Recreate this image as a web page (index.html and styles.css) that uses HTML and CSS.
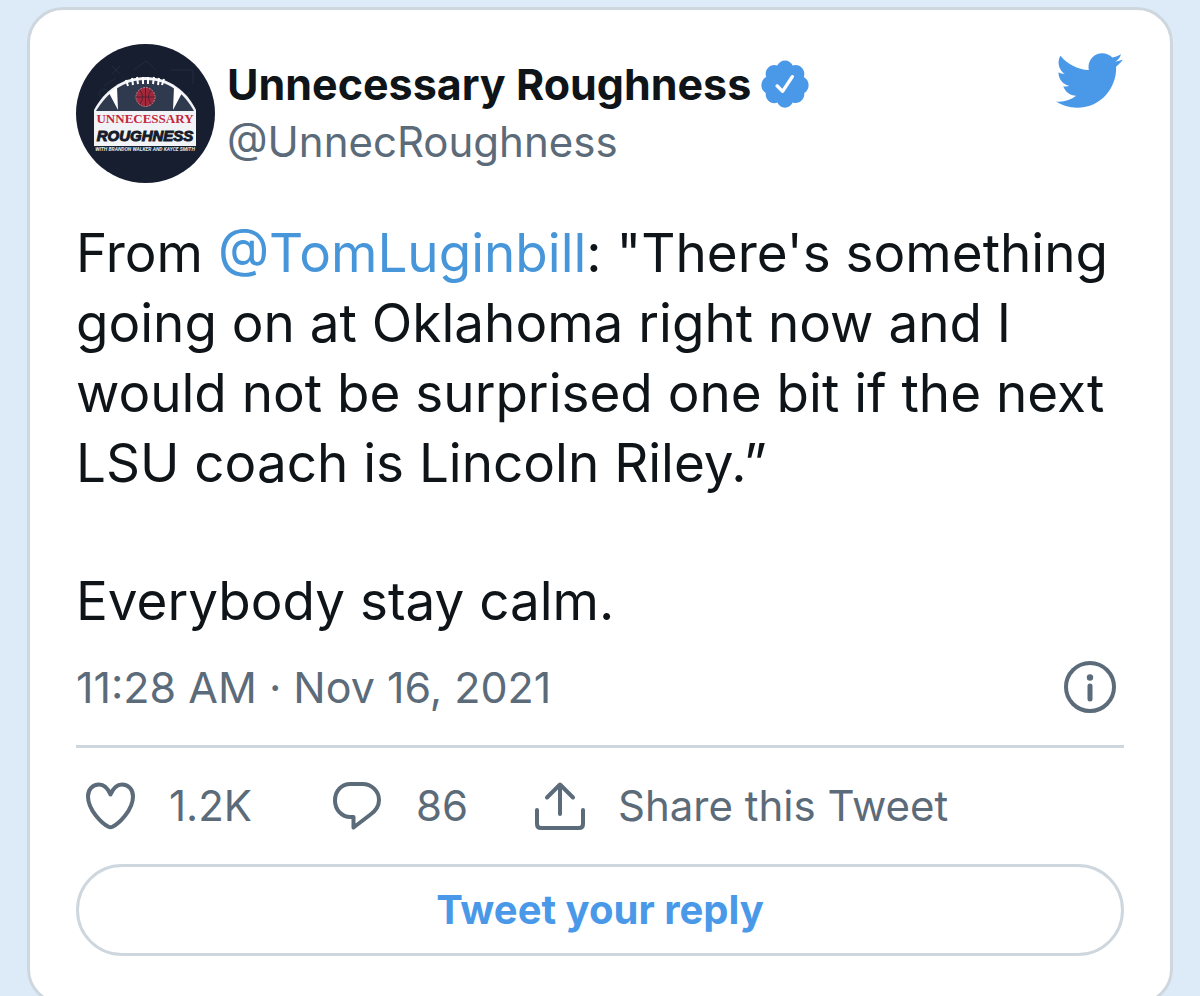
FILE: index.html
```html
<!DOCTYPE html>
<html lang="en">
<head>
    <meta charset="UTF-8">
    <meta name="viewport" content="width=device-width, initial-scale=1.0">
    <title>Unnecessary Roughness on Twitter</title>
    <link rel="stylesheet" href="styles.css">
</head>
<body>
    <article class="tweet">
        <header class="tweet-header">
            <a class="avatar" href="#" aria-label="Unnecessary Roughness">
                <svg viewBox="0 0 139 139">
                    <circle cx="69.500" cy="69.500" r="69.500" fill="#171e30"/>
                    <g fill="none" stroke="#222b40" stroke-width="1">
                        <path d="M36 22l8 8m0-8l-8 8M58 26l12-9 10 9M95 26h22v14M28 42l12-8M104 48l10 10m0-10l-10 10"/>
                        <circle cx="28" cy="50" r="5"/>
                    </g>
                    <!-- football -->
                    <path d="M18 66C28 47 46 33 69.500 33S111 47 120 66v36H18z" fill="#f2f3f6"/>
                    <path d="M20 67C31 49 47 36 69.500 36S108 49 118 67z" fill="#2f3a4e"/>
                    <path d="M33 49L41 43 42 66zM106 49L98 43 97 66z" fill="#fff"/>
                    <path d="M50 36l2 6m4-8l1 7m4-8l1 7m5-7v7m5-7v7m6-7l-1 7m6-6l-1 7m6-6l-2 6" stroke="#fff" stroke-width="2"/>
                    <circle cx="69.500" cy="53" r="9.500" fill="#a3283c"/>
                    <circle cx="69.500" cy="53" r="9.500" fill="none" stroke="#b9828f" stroke-width="1" stroke-dasharray="2 1"/>
                    <path d="M60 53h19M69.500 44v18M64 46q5 7 0 14M75 46q-5 7 0 14" fill="none" stroke="#571f32" stroke-width="1"/>
                    <text class="logo-top" x="69" y="79" text-anchor="middle">UNNECESSARY</text>
                    <text class="logo-mid" x="69" y="97" text-anchor="middle">ROUGHNESS</text>
                    <text class="logo-sub" x="69" y="107" text-anchor="middle">WITH BRANDON WALKER AND KAYCE SMITH</text>
                </svg>
            </a>
            <div class="author">
                <a class="author-name" href="#">Unnecessary Roughness
                    <svg class="verified" viewBox="0 0 24 24" aria-label="Verified account"><path d="M22.500 12.500c0-1.580-.875-2.950-2.148-3.600.154-.435.238-.905.238-1.400 0-2.210-1.710-3.998-3.818-3.998-.470 0-.920.084-1.336.250C14.818 2.415 13.510 1.500 12 1.500s-2.816.917-3.437 2.250c-.415-.165-.866-.250-1.336-.250-2.110 0-3.818 1.790-3.818 4 0 .494.083.964.237 1.400-1.272.650-2.147 2.018-2.147 3.600 0 1.495.782 2.798 1.942 3.486-.020.170-.032.340-.032.514 0 2.210 1.708 4 3.818 4 .470 0 .920-.086 1.335-.250.620 1.334 1.926 2.250 3.437 2.250 1.512 0 2.818-.916 3.437-2.250.415.163.865.248 1.336.248 2.110 0 3.818-1.790 3.818-4 0-.174-.012-.344-.033-.513 1.158-.687 1.943-1.990 1.943-3.484zm-6.616-3.334l-4.334 6.500c-.145.217-.382.334-.625.334-.143 0-.288-.040-.416-.126l-.115-.094-2.415-2.415c-.293-.293-.293-.768 0-1.060s.768-.294 1.060 0l1.770 1.767 3.825-5.740c.230-.345.696-.436 1.040-.207.346.230.440.696.210 1.040z"/></svg>
                </a>
                <a class="author-handle" href="#">@UnnecRoughness</a>
            </div>
            <a class="bird" href="#" aria-label="View on Twitter">
                <svg viewBox="0 0 24 24"><path d="M23.643 4.937c-.835.370-1.732.620-2.675.733.962-.576 1.700-1.490 2.048-2.578-.900.534-1.897.922-2.958 1.130-.850-.904-2.060-1.470-3.400-1.470-2.572 0-4.658 2.086-4.658 4.660 0 .364.042.718.120 1.060-3.873-.195-7.304-2.050-9.602-4.868-.400.690-.630 1.490-.630 2.342 0 1.616.823 3.043 2.072 3.878-.764-.025-1.482-.234-2.110-.583v.060c0 2.257 1.605 4.140 3.737 4.568-.392.106-.803.162-1.227.162-.300 0-.593-.028-.877-.082.593 1.850 2.313 3.198 4.352 3.234-1.595 1.250-3.604 1.995-5.786 1.995-.376 0-.747-.022-1.112-.065 2.062 1.323 4.510 2.093 7.140 2.093 8.570 0 13.255-7.098 13.255-13.254 0-.200-.005-.402-.014-.602.910-.658 1.700-1.477 2.323-2.410z"/></svg>
            </a>
        </header>

        <div class="tweet-text">
            <p>From <a href="#">@TomLuginbill</a>: "There's something going on at Oklahoma right now and I would not be surprised one bit if the next LSU coach is Lincoln Riley.”</p>
            <p>Everybody stay calm.</p>
        </div>

        <div class="tweet-meta">
            <a class="date" href="#">11:28 AM · Nov 16, 2021</a>
            <a class="info" href="#" aria-label="Twitter Ads info and privacy">
                <svg viewBox="0 0 52 52">
                    <circle cx="26" cy="26" r="24" fill="none" stroke="currentColor" stroke-width="4"/>
                    <circle cx="26" cy="16.500" r="3.200" fill="currentColor"/>
                    <path d="M26 25v13" fill="none" stroke="currentColor" stroke-width="5" stroke-linecap="round"/>
                </svg>
            </a>
        </div>

        <div class="actions">
            <button class="action" type="button" aria-label="Like, 1.2K">
                <svg viewBox="0 0 50 50"><path d="M24.500 13.500C22 7.500 18 3.500 13 3.500 6.500 3.500 2 8.500 2 15.500 2 29 16 42.500 22.500 45.700c1.400.700 2.600.700 4 0C33 42.500 47 29 47 15.500 47 8.500 42.500 3.500 36 3.500c-5 0-9 4-11.500 10z"/></svg>
                <span>1.2K</span>
            </button>
            <button class="action" type="button" aria-label="Reply, 86">
                <svg viewBox="0 0 50 50"><path d="M17.500 3h12C38.500 3 46 10 46 19c0 6-3 10.500-8.500 14.500L20.500 46.500V36h-3C8.500 36 2 28.500 2 19.500 2 10 8.500 3 17.500 3z"/></svg>
                <span>86</span>
            </button>
            <button class="action" type="button">
                <svg viewBox="0 0 50 50"><path d="M25 4v29M12 16.500L25 3.500l13 13M2 29v14q0 4 4 4h38q4 0 4-4V29"/></svg>
                <span>Share this Tweet</span>
            </button>
        </div>

        <button class="reply-btn" type="button">Tweet your reply</button>
    </article>
</body>
</html>
```
FILE: styles.css
```css
* {
    margin: 0;
    padding: 0;
    box-sizing: border-box;
}

body {
    background: #ddebf9;
    color: #0f1419;
    font-family: Inter, "Liberation Sans", sans-serif;
    padding: 7px 27px 0;
}

a {
    color: inherit;
    text-decoration: none;
}

svg {
    display: block;
}

.tweet {
    background: #fff;
    border: 3px solid #cfd7de;
    border-radius: 36px;
    padding: 34px 46px 46px;
}

/* header */
.tweet-header {
    display: flex;
    align-items: flex-start;
}

.avatar svg {
    width: 139px;
    height: 139px;
}

.logo-top {
    font: bold 13px "Liberation Serif", serif;
    fill: #c3263c;
    stroke: #c3263c;
    stroke-width: 0;
}

.logo-mid {
    font: italic bold 15px "Liberation Sans", sans-serif;
    fill: #151b2b;
    stroke: #151b2b;
    stroke-width: 1px;
}

.logo-sub {
    font: italic bold 5px Roboto, sans-serif;
    fill: #e4e6ea;
}

.author {
    flex: 1;
    display: flex;
    flex-direction: column;
    padding: 11px 0 0 12px;
    font-size: 42px;
    line-height: 58px;
}

.author-name {
    display: flex;
    align-items: center;
    gap: 7px;
    font-size: 43px;
    font-weight: 700;
}

.verified {
    width: 54px;
    height: 54px;
    fill: #4a99e9;
}

.author-handle {
    color: #5b6b79;
}

.bird svg {
    width: 71px;
    height: 73px;
    fill: #4a99e9;
}

/* text */
.tweet-text {
    margin-top: 35px;
    font-size: 53px;
    line-height: 70px;
}

.tweet-text p + p {
    margin-top: 68px;
}

.tweet-text a {
    color: #4896da;
}

.tweet-meta {
    display: flex;
    justify-content: space-between;
    align-items: center;
    padding: 25px 8px 32px 0;
    border-bottom: 3px solid #cfd7de;
    color: #5b6b79;
    font-size: 43px;
    line-height: 52px;
}

.info svg {
    width: 52px;
    height: 52px;
}

/* actions */
.actions {
    display: grid;
    grid-template-columns: 247px 202px 1fr;
    padding: 32px 0 32px 10px;
}

.action {
    display: flex;
    align-items: center;
    gap: 33px;
    background: none;
    border: 0;
    color: #5b6b79;
    font-family: inherit;
    font-size: 42px;
    line-height: 52px;
    cursor: pointer;
}

.action svg {
    width: 50px;
    height: 50px;
    fill: none;
    stroke: currentColor;
    stroke-width: 4;
    stroke-linecap: round;
    stroke-linejoin: round;
}

.reply-btn {
    width: 100%;
    padding: 18px;
    background: #fff;
    border: 3px solid #cfd7de;
    border-radius: 46px;
    color: #4a99e9;
    font-family: inherit;
    font-size: 40px;
    font-weight: 700;
    line-height: 50px;
    cursor: pointer;
}
```
